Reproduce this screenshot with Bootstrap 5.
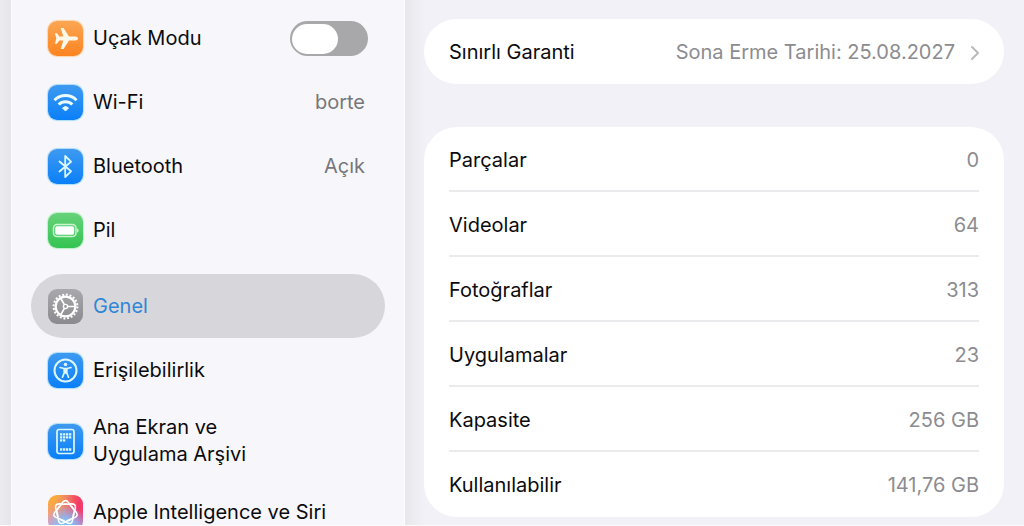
<!DOCTYPE html>
<html lang="tr">
<head>
<meta charset="utf-8">
<meta name="viewport" content="width=device-width, initial-scale=1">
<title>Ayarlar</title>
<link href="https://cdn.jsdelivr.net/npm/bootstrap@5.3.0/dist/css/bootstrap.min.css" rel="stylesheet">
<style>
  body { font-family: Inter, "Open Sans", sans-serif; font-size: 20px; line-height: 27px; color: #0b0b0d; background: #fbfbfd; }
  .shell { height: calc(100vh - 1px); background: #f2f1f7; }
  .side-wrap { flex: 0 0 405px; padding-left: 11px; background: linear-gradient(90deg, #ececf0, #e6e6ea 11px); }
  .side-panel { height: 100%; padding: 6px 19px 0; background: #f7f7fb; border: 0 solid #fdfdff; border-width: 0 1px; }
  .side-row { min-height: 64px; padding: 12px 17px; gap: 10px; border-radius: 32px; color: inherit; text-decoration: none; }
  .side-row.is-active { background: #d7d6da; color: #2f86d6; }
  .side-group { margin-top: 12px; }
  .side-value { color: #77777b; margin-right: 3px; }
  .tile { width: 35px; height: 35px; border-radius: 9px; flex: none; }
  .tile svg { display: block; width: 35px; height: 35px; }
  .t-orange { background: linear-gradient(#fba653, #fc8420); box-shadow: 0 0 1px 1px #fdd3a8; }
  .t-blue { background: linear-gradient(#3e9af0, #0a7ff8); box-shadow: 0 0 1px 1px #a9dcfa; }
  .t-green { background: linear-gradient(#67d27a, #34c452); box-shadow: 0 0 1px 1px #b9f0c3; }
  .t-gray { background: linear-gradient(#a9a8ad, #8b8a8f); }
  .t-ai { background: radial-gradient(circle at 50% 90%, #7cc4fb 15%, transparent 60%), radial-gradient(circle at 0 0, #fcaa3c 15%, transparent 65%), radial-gradient(circle at 100% 15%, #f43a6a 20%, transparent 75%), radial-gradient(circle at 0 75%, #f08fc8 20%, transparent 65%), #b98fe8; }
  .air-switch.form-check-input { width: 78px; height: 35px; margin: 0; border: 0; border-radius: 18px; background-color: #a8a8aa; background-image: none; box-shadow: none; cursor: pointer; }
  .air-switch::after { content: ""; display: block; width: 46px; height: 30px; margin: 3px 2px 2px; border-radius: 15px; background: #fff; }
  .air-switch.form-check-input:checked { background-color: #34c452; }
  .air-switch:checked::after { margin-left: 30px; }
  .main-pane { padding: 19px 20px 8px 19px; background: linear-gradient(90deg, #e7e7eb, #f2f1f7 20px); }
  .panel-box { border-radius: 33px; background: #fff; padding: 0 25px; }
  .info-row { height: 65px; padding-top: 2px; color: #0b0b0d; text-decoration: none; }
  .info-row:not(:last-child) { padding-top: 4px; border-bottom: 2px solid #ebebed; }
  .info-value { color: #8c8c90; }
  .panel-gap { gap: 43px; }
  @media (max-width: 767px) { .shell { height: auto; } .side-wrap { flex: none; padding-right: 11px; } }
</style>
</head>
<body>
<div class="shell d-flex flex-column flex-md-row overflow-hidden">
  <aside class="side-wrap">
    <nav class="side-panel" aria-label="Ayarlar">
      <label class="side-row d-flex align-items-center" for="airplane">
        <span class="tile t-orange"><svg viewBox="0 0 35 35" fill="#fff8e9"><path d="M30 17.500c0-1.300-1.300-2-2.800-2H21L15.500 7h-2.800l2.600 8.500h-4L9 12.300H7l1.300 5.200L7 22.700h2l2.300-3.200h4L12.700 28h2.800l5.500-8.500h6.200c1.500 0 2.800-.7 2.800-2z"/></svg></span>
        <span class="flex-grow-1">Uçak Modu</span>
        <input class="form-check-input air-switch" type="checkbox" role="switch" id="airplane">
      </label>
      <a href="#" class="side-row d-flex align-items-center">
        <span class="tile t-blue"><svg viewBox="0 0 35 35" fill="none" stroke="#eafcff" stroke-width="3"><path d="M6.500 15.200a15.500 15.500 0 0 1 22 0M10.700 19.500a9.700 9.700 0 0 1 13.600 0"/><path d="M17.500 26l-3-3a4.300 4.300 0 0 1 6 0z" fill="#eafcff" stroke-width="1"/></svg></span>
        <span class="flex-grow-1">Wi-Fi</span><span class="side-value">borte</span>
      </a>
      <a href="#" class="side-row d-flex align-items-center">
        <span class="tile t-blue"><svg viewBox="0 0 35 35" fill="none" stroke="#dcf8ff" stroke-width="1.800" stroke-linejoin="round" stroke-linecap="round"><path d="M11.500 12.500l11.500 9.800-5.800 5.700V7l5.800 5.700-11.500 9.800"/></svg></span>
        <span class="flex-grow-1">Bluetooth</span><span class="side-value">Açık</span>
      </a>
      <a href="#" class="side-row d-flex align-items-center">
        <span class="tile t-green"><svg viewBox="0 0 35 35"><rect x="5.500" y="11.500" width="22.500" height="12" rx="3.500" fill="none" stroke="#c9f5d0" stroke-width="1.500"/><rect x="7.200" y="13.200" width="19" height="8.600" rx="2" fill="#fff"/><path d="M29 15.500c2.200.5 2.200 3.600 0 4.100z" fill="#c9f5d0"/></svg></span>
        <span>Pil</span>
      </a>
      <a href="#" class="side-row side-group is-active d-flex align-items-center" aria-current="page">
        <span class="tile t-gray"><svg viewBox="0 0 35 35" fill="none" stroke="#fff"><circle cx="17.500" cy="17.500" r="9.800" stroke-width="2.200"/><circle cx="17.500" cy="17.500" r="11.900" stroke-width="2" stroke-dasharray="2 1.739"/><circle cx="17.500" cy="17.500" r="2.100" stroke-width="1.400"/><path d="M19.600 17.500h8M16.400 15.600l-4-6.900M16.400 19.400l-4 6.900" stroke-width="1.700"/></svg></span>
        <span>Genel</span>
      </a>
      <a href="#" class="side-row d-flex align-items-center">
        <span class="tile t-blue"><svg viewBox="0 0 35 35" fill="none" stroke="#dcf8ff" stroke-linecap="round" stroke-linejoin="round"><circle cx="17.500" cy="17.500" r="11" stroke-width="2"/><circle cx="17.500" cy="11.500" r="1.800" fill="#dcf8ff" stroke="none"/><path d="M12 14.500l4 1h3l4-1M14.500 24.200l1.700-4.400v-3.500h2.600v3.500l1.700 4.400M17.500 16v4" stroke-width="1.700"/></svg></span>
        <span>Erişilebilirlik</span>
      </a>
      <a href="#" class="side-row d-flex align-items-center">
        <span class="tile t-blue"><svg viewBox="0 0 35 35" fill="none" stroke="#dcf8ff"><rect x="9" y="5.500" width="17" height="24" rx="2.200" stroke-width="1.700"/><path d="M12 10.300h12M12 13.300h12M12 16.300h6M12 25.500h12" stroke-width="2.300" stroke-dasharray="2.300 .7"/></svg></span>
        <span>Ana Ekran ve<br>Uygulama Arşivi</span>
      </a>
      <a href="#" class="side-row d-flex align-items-center">
        <span class="tile t-ai"><svg viewBox="0 0 35 35" fill="none" stroke="#fff" stroke-width="1.600"><path id="loop" d="M9.500 13C13 13 13.500 5.500 17.500 5.500S22 13 25.500 13"/><use href="#loop" transform="rotate(51.430 17.500 17.500)"/><use href="#loop" transform="rotate(102.860 17.500 17.500)"/><use href="#loop" transform="rotate(154.290 17.500 17.500)"/><use href="#loop" transform="rotate(205.710 17.500 17.500)"/><use href="#loop" transform="rotate(257.140 17.500 17.500)"/><use href="#loop" transform="rotate(308.570 17.500 17.500)"/></svg></span>
        <span class="text-nowrap">Apple Intelligence ve Siri</span>
      </a>
    </nav>
  </aside>
  <main class="main-pane panel-gap flex-grow-1 d-flex flex-column">
    <section class="panel-box">
      <a href="#" class="info-row d-flex align-items-center justify-content-between">
        <span>Sınırlı Garanti</span>
        <span class="info-value d-flex align-items-center gap-3">Sona Erme Tarihi: 25.08.2027
          <svg width="8" height="16" viewBox="0 0 8 16" fill="none" stroke="#b9b9bd" stroke-width="2" stroke-linecap="round" stroke-linejoin="round" aria-hidden="true"><path d="M1 2l6 6-6 6"/></svg></span>
      </a>
    </section>
    <dl class="panel-box mb-0">
      <div class="info-row d-flex align-items-center justify-content-between"><dt class="fw-normal">Parçalar</dt><dd class="info-value mb-0">0</dd></div>
      <div class="info-row d-flex align-items-center justify-content-between"><dt class="fw-normal">Videolar</dt><dd class="info-value mb-0">64</dd></div>
      <div class="info-row d-flex align-items-center justify-content-between"><dt class="fw-normal">Fotoğraflar</dt><dd class="info-value mb-0">313</dd></div>
      <div class="info-row d-flex align-items-center justify-content-between"><dt class="fw-normal">Uygulamalar</dt><dd class="info-value mb-0">23</dd></div>
      <div class="info-row d-flex align-items-center justify-content-between"><dt class="fw-normal">Kapasite</dt><dd class="info-value mb-0">256 GB</dd></div>
      <div class="info-row d-flex align-items-center justify-content-between"><dt class="fw-normal">Kullanılabilir</dt><dd class="info-value mb-0">141,76 GB</dd></div>
    </dl>
  </main>
</div>
<script src="https://cdn.jsdelivr.net/npm/bootstrap@5.3.0/dist/js/bootstrap.bundle.min.js"></script>
</body>
</html>
